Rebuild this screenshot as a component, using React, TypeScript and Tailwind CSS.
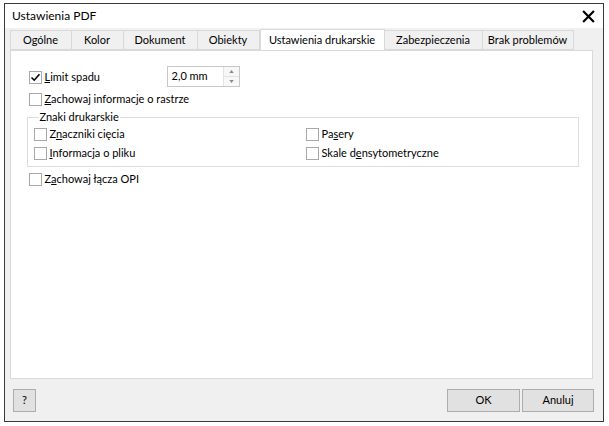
import { ReactNode } from "react";

const font = { fontFamily: 'Lato, "Noto Sans", sans-serif' };

const tabs = [
  { label: "Ogólne", w: "w-[62px]" },
  { label: "Kolor", w: "w-[53px]" },
  { label: "Dokument", w: "w-[75px]" },
  { label: "Obiekty", w: "w-[63px]" },
  { label: "Ustawienia drukarskie", w: "w-[125px]", active: true },
  { label: "Zabezpieczenia", w: "w-[99px]" },
  { label: "Brak problemów", w: "w-[92px]" },
];

function Box({ checked }: { checked?: boolean }) {
  return (
    <span className="flex h-[13px] w-[13px] shrink-0 items-center justify-center border border-[#a8a8a8] bg-white">
      {checked && (
        <svg viewBox="0 0 11 11" className="h-[11px] w-[11px]">
          <path d="M1.5 5.5 L4.2 8.2 L9.5 2.2" fill="none" stroke="#000" strokeWidth="1.6" />
        </svg>
      )}
    </span>
  );
}

function Check({ checked, children }: { checked?: boolean; children: ReactNode }) {
  return (
    <div className="flex h-[19px] items-center gap-[3px] whitespace-nowrap">
      <Box checked={checked} />
      <span>{children}</span>
    </div>
  );
}

function Btn({ children, w }: { children: ReactNode; w: string }) {
  return (
    <div className={`${w} flex h-[23px] items-center justify-center border border-[#adadad] bg-[#e1e1e1]`}>
      {children}
    </div>
  );
}

export default function App() {
  return (
    <div className="h-[426px] w-[609px] bg-white pl-[4px] pt-[3px] text-[11px] text-black" style={font}>
      <div className="flex h-[419px] w-[600px] flex-col border-[1.5px] border-[#3a3a3a] bg-[#f0f0f0]">
        {/* title bar */}
        <div className="flex h-[24px] shrink-0 items-center justify-between bg-white pl-[7px] pr-[8px] text-[12px]">
          <span>Ustawienia PDF</span>
          <svg viewBox="0 0 12 12" className="h-[13px] w-[13px]">
            <path d="M1 1 L11 11 M11 1 L1 11" stroke="#000" strokeWidth="2" />
          </svg>
        </div>

        {/* tabs */}
        <div className="flex h-[22px] shrink-0 items-end whitespace-nowrap pl-[4.5px]">
          {tabs.map((t) =>
            t.active ? (
              <div
                key={t.label}
                className={`${t.w} -mb-px flex h-[22px] items-center justify-center border border-b-0 border-[#d9d9d9] bg-white`}
              >
                {t.label}
              </div>
            ) : (
              <div
                key={t.label}
                className={`${t.w} -ml-px flex h-[20px] items-center justify-center border border-[#d9d9d9] bg-[#f0f0f0] first:ml-0`}
              >
                {t.label}
              </div>
            )
          )}
        </div>

        {/* panel */}
        <div className="ml-[4.5px] mr-[10px] h-[329px] shrink-0 border border-[#d9d9d9] bg-white pl-[18px] pr-[13px] pt-[15px]">
          <div className="flex items-center">
            <div className="w-[138px] pt-[2px]">
              <Check checked>
                <u>L</u>imit spadu
              </Check>
            </div>
            <div className="flex h-[21px] w-[73px] items-stretch border border-[#c8c8c8]">
              <span className="flex flex-1 items-center pl-[4px]">2,0 mm</span>
              <div className="flex w-[16px] flex-col border-l border-[#e3e3e3] bg-[#f7f7f7]">
                <div className="flex flex-1 items-center justify-center">
                  <svg viewBox="0 0 6 4" className="h-[3px] w-[5px]">
                    <path d="M0 4 L3 0 L6 4 Z" fill="#8a8a8a" />
                  </svg>
                </div>
                <div className="flex flex-1 items-center justify-center border-t border-[#e3e3e3]">
                  <svg viewBox="0 0 6 4" className="h-[3px] w-[5px]">
                    <path d="M0 0 L3 4 L6 0 Z" fill="#8a8a8a" />
                  </svg>
                </div>
              </div>
            </div>
          </div>
          <div className="mt-[3px]">
            <Check>
              <u>Z</u>achowaj informacje o rastrze
            </Check>
          </div>

          <fieldset className="-ml-[2px] mt-[1px] border border-[#dcdcdc] pb-[3px] pl-[6px] pt-0">
            <legend className="ml-[5px] px-[1px] leading-[14px]">Znaki drukarskie</legend>
            <div className="grid grid-cols-[272px_1fr] pt-[1px]">
              <Check>
                Z<u>n</u>aczniki cięcia
              </Check>
              <Check>
                Pa<u>s</u>ery
              </Check>
              <Check>
                <u>I</u>nformacja o pliku
              </Check>
              <Check>
                Skale d<u>e</u>nsytometryczne
              </Check>
            </div>
          </fieldset>

          <div className="mt-[3px]">
            <Check>
              Z<u>a</u>chowaj łącza OPI
            </Check>
          </div>
        </div>

        {/* bottom buttons */}
        <div className="flex flex-1 items-center justify-between pl-[8px] pr-[9px]">
          <Btn w="w-[23px]">?</Btn>
          <div className="flex gap-[2px]">
            <Btn w="w-[73px]">OK</Btn>
            <Btn w="w-[72px]">Anuluj</Btn>
          </div>
        </div>
      </div>
    </div>
  );
}
